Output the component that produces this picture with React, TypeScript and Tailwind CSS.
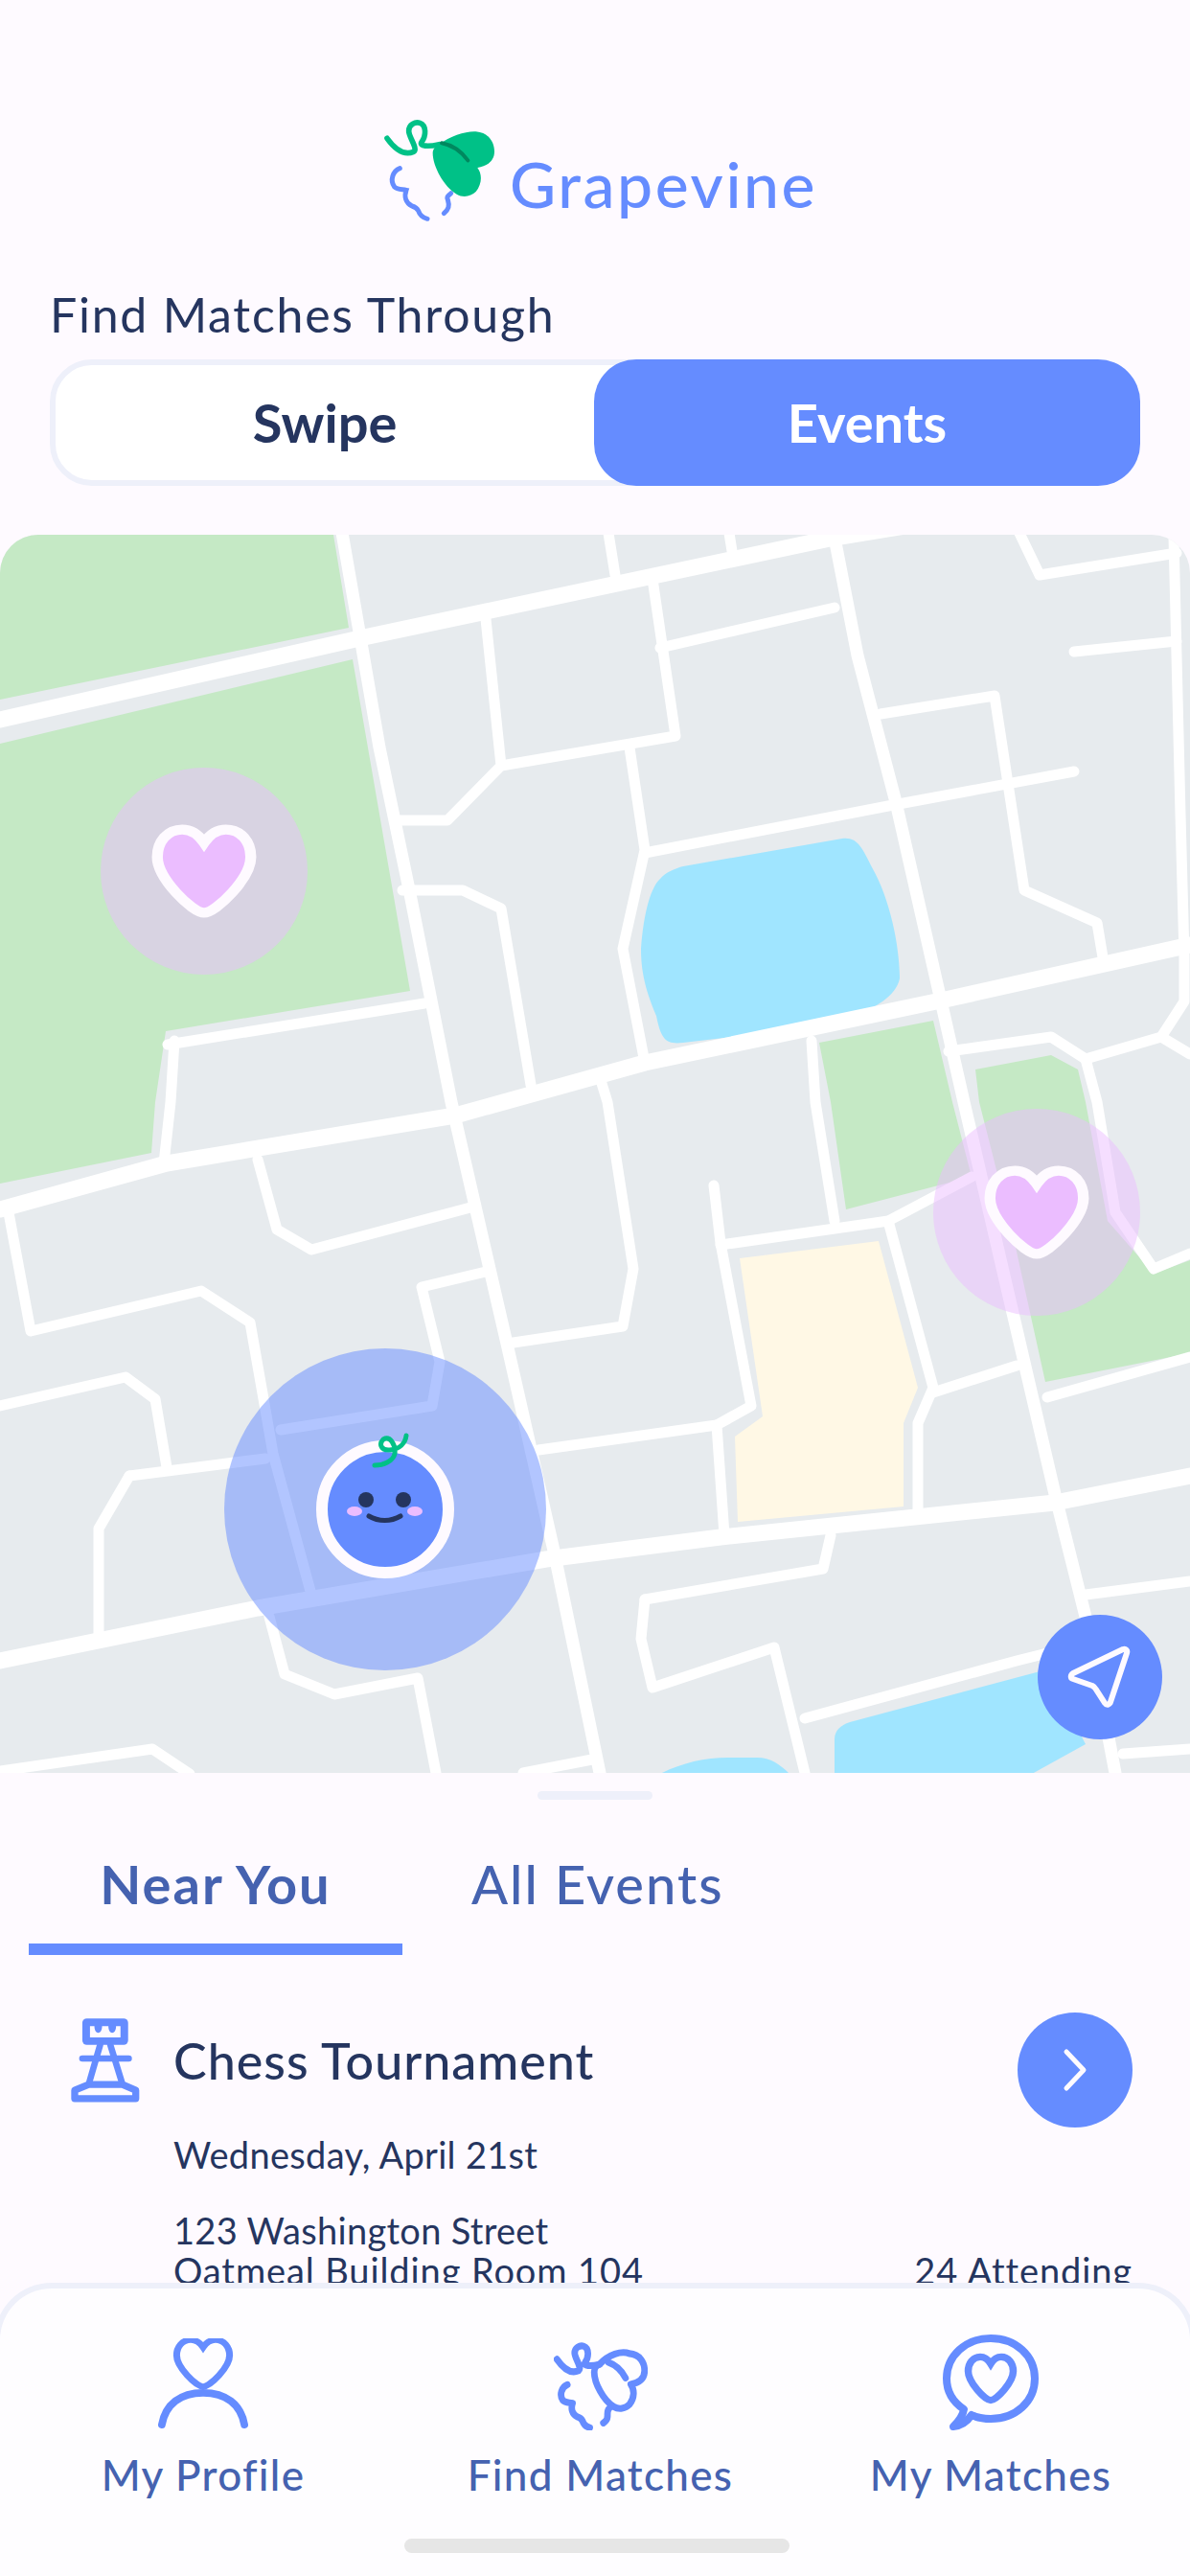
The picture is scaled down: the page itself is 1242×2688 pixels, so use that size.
const major = [
  "0,751 380,665 871,561 1000,540",
  "0,1262 174,1214 475,1164 673,1109 982,1044 1242,986",
  "0,1733 269,1678 570,1627 752,1604 1101,1568 1242,1540",
];
const wide = [
  "356,550 396,780 428,933 471,1150 511,1324 529,1402 578,1618 626,1850",
  "871,561 895,684 935,837 982,1044 1006,1150 1057,1370 1101,1559 1133,1687 1164,1850",
];
const roads = [
  "507,646 523,799 467,856 412,856",
  "523,799 705,768 681,604",
  "689,676 871,634",
  "634,550 642,600",
  "760,550 764,575",
  "657,780 673,887 650,990 673,1109",
  "673,890 927,841 1121,805",
  "919,745 1038,726 1069,929 1145,963 1152,1005",
  "1061,550 1085,600 1228,577",
  "1225,560 1232,850 1236,998 1236,1045 1212,1082 1133,1105 1097,1082 990,1097",
  "1212,1082 1242,1100",
  "1121,680 1228,669",
  "420,929 483,929 523,948 554,1132",
  "626,1124 634,1150 661,1324 650,1384 529,1402",
  "175,1090 443,1047",
  "182,1086 178,1150 171,1214",
  "847,1086 851,1150 871,1274",
  "745,1237 752,1297 784,1467 748,1487 756,1602",
  "752,1299 927,1274 1014,1228",
  "927,1274 974,1448 958,1485 958,1577",
  "562,1513 748,1487",
  "974,1453 1061,1425",
  "1093,1458 1242,1416",
  "1133,1664 1242,1650",
  "1133,1105 1145,1150 1164,1265 1204,1324 1242,1308",
  "0,1467 131,1437 162,1460 174,1531",
  "135,1540 277,1522",
  "293,1492 451,1467 459,1421 440,1343 507,1327",
  "135,1540 103,1595 103,1708",
  "8,1260 32,1389 210,1347 261,1380 277,1471 285,1517 325,1664",
  "281,1687 297,1747 349,1768 436,1751 455,1850",
  "269,1210 289,1283 325,1304 491,1260",
  "673,1669 859,1637 867,1602",
  "673,1669 669,1710 681,1761 808,1719 840,1850",
  "840,1793 1061,1733 1133,1715",
  "1172,1830 1242,1825",
  "0,1848 159,1825 198,1851",
  "546,1850 618,1836",
];

const HEART =
  "M50 18 C44 8 37 3 28 3 C13 3 3 17 3 34 C3 58 38 97 50 97 C62 97 97 58 97 34 C97 17 87 3 72 3 C63 3 56 8 50 18Z";

function MapArt() {
  return (
    <svg viewBox="0 558 1242 1292" width="1242" height="1292" className="block">
      <rect x="0" y="558" width="1242" height="1292" fill="#e7ebee" />
      <g fill="#c5e9c5">
        <polygon points="0,558 348,558 364,655 0,730" />
        <polygon points="0,776 368,688 428,1034 173,1076 162,1150 158,1203 0,1235" />
        <polygon points="855,1088 974,1065 994,1150 1014,1228 883,1262 867,1150" />
        <path d="M1018 1116 L1097 1101 L1125 1116 L1133 1150 L1156 1274 L1204 1329 L1242 1315 V1412 L1091 1442 L1057 1288 L1022 1150Z" />
      </g>
      <g fill="#a0e5ff">
        <path d="M713 904 L879 875 C895 873 900 885 910 905 C930 940 939 990 939 1021 C935 1040 915 1050 880 1068 L713 1088 C695 1090 690 1085 685 1060 C672 1030 669 1010 669 990 C672 950 680 925 689 917 C695 910 705 906 713 904Z" />
        <path d="M887 1797 L1093 1742 L1133 1820 L1077 1851 H871 V1815 C871 1805 878 1800 887 1797Z" />
        <path d="M689 1851 C710 1840 735 1834 760 1834 H790 C805 1834 815 1842 824 1851Z" />
      </g>
      <polygon points="772,1313 917,1295 958,1448 943,1485 943,1572 770,1588 767,1499 796,1478" fill="#fff8e5" />
      <g fill="none" stroke="#ffffff" strokeLinejoin="round" strokeLinecap="round">
        {major.map((p) => (
          <polyline key={p} points={p} strokeWidth="17" />
        ))}
        {wide.map((p) => (
          <polyline key={p} points={p} strokeWidth="13" />
        ))}
        {roads.map((p) => (
          <polyline key={p} points={p} strokeWidth="11" />
        ))}
      </g>
    </svg>
  );
}

function Logo() {
  return (
    <svg viewBox="0 0 456 390" width="152" height="130" className="shrink-0">
      <path d="M72 103 C95 135 125 158 155 145 C170 135 140 100 140 80 C140 60 160 50 175 55 C195 62 195 95 180 115 C172 128 200 130 235 122" fill="none" stroke="#00c187" strokeWidth="17" strokeLinecap="round" />
      <path d="M235 122 C270 95 320 80 350 82 C390 85 408 115 408 145 C408 175 385 190 355 195 C370 215 370 245 350 270 C335 285 310 290 290 278 C250 255 215 190 215 150 C215 135 225 125 235 122Z" fill="#00c187" />
      <path d="M243 118 C280 125 305 145 325 172" fill="none" stroke="#00885f" strokeWidth="12" strokeLinecap="round" />
      <path d="M112 197 C90 205 80 235 95 255 C105 265 120 262 132 265 C125 285 130 305 150 315 C160 318 165 320 170 330 C175 345 185 352 198 355" fill="none" stroke="#658cff" strokeWidth="15" strokeLinecap="round" />
      <path d="M272 275 C262 285 258 285 262 295 C268 315 265 325 250 338" fill="none" stroke="#658cff" strokeWidth="15" strokeLinecap="round" />
    </svg>
  );
}

function Pin({ cls }: { cls: string }) {
  return (
    <div className={`absolute w-[216px] h-[216px] rounded-full bg-[#ebbdff]/50 flex items-center justify-center ${cls}`}>
      <svg viewBox="-3 -3 106 106" width="110" height="98" preserveAspectRatio="none">
        <path d={HEART} fill="#ebbdff" stroke="#fefaff" strokeWidth="11" />
      </svg>
    </div>
  );
}

function Chess() {
  return (
    <svg viewBox="30 66 226 276" width="75" height="92" className="shrink-0">
      <rect x="72" y="72" width="144" height="83" rx="14" fill="#658cff" />
      <path d="M96 96 H110 C110 124 134 124 134 96 H154 C154 124 178 124 178 96 H192 V132 H96Z" fill="#fefaff" />
      <g stroke="#658cff" fill="none" strokeLinecap="round" strokeLinejoin="round">
        <path d="M128 155 L94 272 M160 155 L196 272" strokeWidth="20" />
        <path d="M72 198 H218" strokeWidth="20" />
        <path d="M92 280 H198 L240 298 V324 H48 V298Z" strokeWidth="22" />
      </g>
    </svg>
  );
}

function ProfileIcon() {
  return (
    <svg viewBox="0 0 96 98" width="94" height="96" className="block">
      <g transform="translate(18,0) scale(0.6,0.53)">
        <path d={HEART} fill="none" stroke="#658cff" strokeWidth="12" />
      </g>
      <path d="M4 92 C8 70 24 58 48 58 C72 58 88 70 92 92" fill="none" stroke="#658cff" strokeWidth="8" strokeLinecap="round" />
    </svg>
  );
}

function VineIcon() {
  return (
    <svg viewBox="60 40 360 325" width="98" height="92" className="block" preserveAspectRatio="none">
      <g fill="none" stroke="#658cff" strokeWidth="25" strokeLinecap="round" strokeLinejoin="round">
        <path d="M72 103 C95 135 125 158 155 145 C170 135 140 100 140 80 C140 60 160 50 175 55 C195 62 195 95 180 115 C172 128 200 130 235 122" />
        <path d="M235 122 C270 85 320 70 350 82 C390 85 408 115 408 145 C408 175 385 190 355 195 C370 215 370 245 350 270 C335 285 310 290 290 278 C250 255 215 190 215 150 C215 135 225 125 235 122Z" />
        <path d="M270 115 C300 125 320 145 335 172" />
        <path d="M112 197 C90 205 80 235 95 255 C105 265 120 262 132 265 C125 285 130 305 150 315 C160 318 165 320 170 330 C175 345 185 352 198 355" />
        <path d="M272 285 C262 295 268 305 265 318 C265 325 258 332 250 338" />
      </g>
    </svg>
  );
}

function ChatIcon() {
  return (
    <svg viewBox="0 0 100 100" width="100" height="100" className="block">
      <path d="M22 78 C10 70 4 60 4 46 C4 22 24 4 50 4 C76 4 96 22 96 46 C96 70 76 88 50 88 C42 88 36 87 30 84 C26 90 20 95 11 96 C17 90 21 85 22 78Z" fill="none" stroke="#658cff" strokeWidth="8" strokeLinejoin="round" />
      <g transform="translate(25,22) scale(0.5,0.48)">
        <path d={HEART} fill="none" stroke="#658cff" strokeWidth="15" />
      </g>
    </svg>
  );
}

function NavItem({ label, width, children }: { label: string; width: string; children: React.ReactNode }) {
  return (
    <div className={`flex flex-col items-center ${width}`}>
      <div className="h-[104px] flex items-end justify-center">{children}</div>
      <div className="mt-[18px] text-[44px] leading-[56px] font-medium tracking-[1.3px] text-[#4562b0] whitespace-nowrap">{label}</div>
    </div>
  );
}

export default function App() {
  return (
    <div className="w-[1242px] h-[2688px] bg-[#fefaff] flex flex-col overflow-hidden font-['Lato',sans-serif]">
      <div className="flex items-center pt-[110px] pl-[380px]">
        <Logo />
        <div className="text-[66px] leading-[80px] font-medium text-[#658cff] mt-[34px] tracking-[2.6px]">Grapevine</div>
      </div>
      <div className="mt-[58px] pl-[52px] text-[50px] leading-[60px] font-normal text-[#25355f] tracking-[1.75px]">Find Matches Through</div>
      <div className="mt-[17px] mx-[52px] h-[132px] flex rounded-[44px] border-[6px] border-[#eef0fa] bg-white relative">
        <div className="flex-1 flex items-center justify-center text-[56px] font-bold text-[#25355f]">Swipe</div>
        <div className="w-[570px] -my-[6px] -mr-[6px] rounded-[44px] bg-[#658cff] flex items-center justify-center text-[56px] font-bold text-white">Events</div>
      </div>
      <div className="mt-[51px] h-[1292px] shrink-0 relative rounded-t-[40px] overflow-hidden">
        <MapArt />
        <Pin cls="left-[105px] top-[243px]" />
        <Pin cls="left-[974px] top-[599px]" />
        <div className="absolute left-[234px] top-[849px] w-[336px] h-[336px] rounded-full bg-[#658cff]/50" />
        <svg viewBox="0 0 180 180" width="180" height="180" className="absolute left-[310px] top-[912px]">
          <circle cx="92" cy="105" r="66" fill="#658cff" stroke="#fefaff" strokeWidth="12" />
          <circle cx="72" cy="95" r="8" fill="#25355f" />
          <circle cx="111" cy="95" r="8" fill="#25355f" />
          <ellipse cx="60" cy="107" rx="8" ry="5" fill="#ebbdff" />
          <ellipse cx="123" cy="107" rx="8" ry="5" fill="#ebbdff" />
          <path d="M75 112 C85 118 98 118 108 112" fill="none" stroke="#25355f" strokeWidth="5" strokeLinecap="round" />
          <path d="M114 28 C113 36 107 42 97 43 C88 44 85 37 90 32 C97 28 103 37 102 47 C100 55 90 59 81 59" fill="none" stroke="#00c187" strokeWidth="5" strokeLinecap="round" />
        </svg>
        <div className="absolute left-[1083px] top-[1127px] w-[130px] h-[130px] rounded-full bg-[#658cff] flex items-center justify-center">
          <svg viewBox="0 0 70 70" width="70" height="70">
            <path d="M59 6 L7 31 C4 33 4 36 7 37 L27 44 C29 45 30 46 31 48 L40 62 C42 65 45 64 46 61 L63 10 C64 7 62 5 59 6Z" fill="none" stroke="#fefaff" strokeWidth="6" strokeLinejoin="round" />
          </svg>
        </div>
      </div>
      <div className="h-[532px] shrink-0 rounded-t-[28px] bg-[#fefaff] overflow-hidden flex flex-col">
        <div className="shrink-0 mt-[19px] mx-auto w-[120px] h-[9px] rounded-full bg-[#eef0fa]" />
        <div className="shrink-0 mt-[26px] flex pl-[30px]">
          <div className="w-[390px] h-[136px] border-b-[12px] border-[#658cff] flex items-center justify-center text-[56px] font-bold tracking-[2px] text-[#4562b0]">Near You</div>
          <div className="ml-[72px] h-[124px] flex items-center text-[56px] font-medium tracking-[2px] text-[#4562b0]">All Events</div>
        </div>
        <div className="shrink-0 mt-[64px] pl-[72px] pr-[60px] flex items-start">
          <Chess />
          <div className="ml-[34px] flex-1 min-w-0">
            <div className="flex justify-between items-start">
              <div className="mt-[16px] text-[52px] leading-[60px] font-medium tracking-[1px] text-[#25355f]">Chess Tournament</div>
              <div className="-mt-[4px] w-[120px] h-[120px] rounded-full bg-[#658cff] flex items-center justify-center">
                <svg viewBox="0 0 40 50" width="40" height="50">
                  <path d="M11 6 L29 25 L11 44" fill="none" stroke="#fefaff" strokeWidth="5" strokeLinecap="round" strokeLinejoin="round" />
                </svg>
              </div>
            </div>
            <div className="mt-[7px] text-[38px] leading-[42px] tracking-[0.3px] text-[#25355f]">Wednesday, April 21st</div>
            <div className="mt-[37px] text-[38px] leading-[42px] tracking-[0.3px] text-[#25355f]">123 Washington Street</div>
            <div className="flex justify-between text-[38px] leading-[42px] tracking-[0.9px] text-[#25355f]">
              <span>Oatmeal Building Room 104</span>
              <span>24 Attending</span>
            </div>
          </div>
        </div>
      </div>
      <div className="flex-1 min-h-0 relative rounded-t-[60px] border-t-[6px] border-x-[6px] border-[#eef0fa] bg-[#fefdff] -mx-[6px]">
        <div className="flex pt-[44px] pl-[108px]">
          <NavItem label="My Profile" width="w-[208px]"><ProfileIcon /></NavItem>
          <NavItem label="Find Matches" width="w-[279px] ml-[171px]"><VineIcon /></NavItem>
          <NavItem label="My Matches" width="w-[254px] ml-[141px]"><ChatIcon /></NavItem>
        </div>
        <div className="absolute left-[422px] top-[261px] w-[402px] h-[15px] rounded-full bg-[#e6e6e6]" />
      </div>
    </div>
  );
}
